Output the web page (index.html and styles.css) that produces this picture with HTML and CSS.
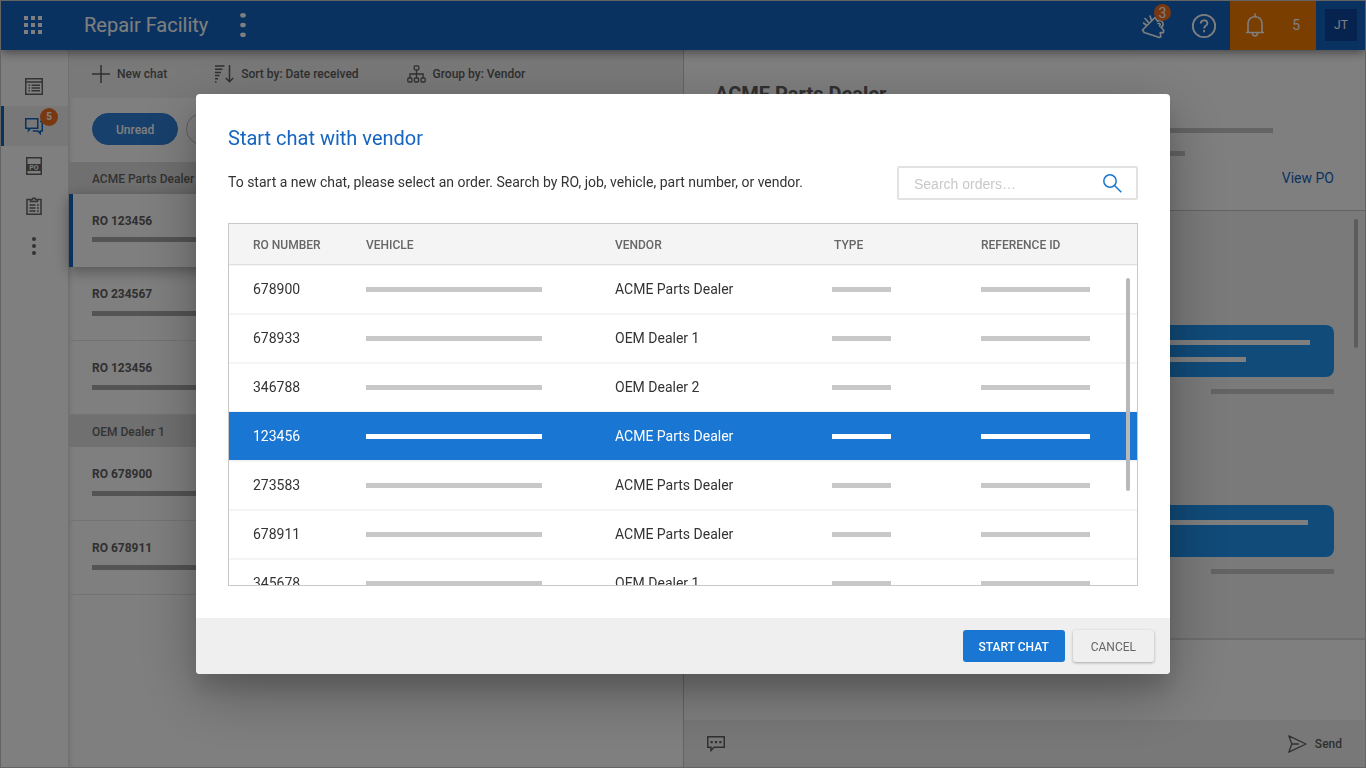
FILE: index.html
```html
<!DOCTYPE html>
<html lang="en">
<head>
<meta charset="utf-8">
<title>Repair Facility</title>
<meta name="viewport" content="width=device-width, initial-scale=1">
<link rel="stylesheet" href="styles.css">
</head>
<body>
<div class="app">
  <header class="topbar">
    <button class="icon-btn apps" aria-label="Apps">
      <svg width="18" height="18" viewBox="0 0 18 18" fill="currentColor"><path d="M0 0h4v4H0zM7 0h4v4H7zM14 0h4v4h-4zM0 7h4v4H0zM7 7h4v4H7zM14 7h4v4h-4zM0 14h4v4H0zM7 14h4v4H7zM14 14h4v4h-4z"/></svg>
    </button>
    <h1 class="brand">Repair Facility</h1>
    <button class="icon-btn more" aria-label="More">
      <svg width="6" height="24" viewBox="0 0 6 24" fill="currentColor"><ellipse cx="3" cy="2.300" rx="2.800" ry="2.300"/><ellipse cx="3" cy="12" rx="2.800" ry="2.300"/><ellipse cx="3" cy="21.700" rx="2.800" ry="2.300"/></svg>
    </button>
    <div class="topbar-actions">
      <button class="icon-btn tile" aria-label="Announcements, 3 new">
        <svg width="26" height="26" viewBox="0 0 26 26" fill="none" stroke="currentColor" stroke-width="1.600" stroke-linejoin="round" stroke-linecap="round"><path d="M15 4.500L2.500 17l1.700 2.500L19.500 24.500l1.300-1-.6-4 3 .3.600-2.300-2.600-3.200M15 4.500l2.500 3.500"/><path d="M17.500 8c4.500-2 7.700 3.500 3.700 6.300M18 10.500c2.200-.6 3 1.400 1.500 2.500M3.500 10l2.600 2M5 5.500l3.200 3.600M10 3l1.400 4"/></svg>
        <span class="badge badge-top">3</span>
      </button>
      <button class="icon-btn tile tile-help" aria-label="Help">
        <svg width="26" height="26" viewBox="0 0 26 26" fill="none" stroke="currentColor" stroke-width="1.800"><circle cx="13" cy="13" r="11.200"/><path d="M9.800 10.500c0-4.300 6.600-4.200 6.600-.3 0 2.600-3.300 2.600-3.300 5.200M13.100 17v2.200"/></svg>
      </button>
      <button class="alerts" aria-label="5 notifications">
        <svg width="20" height="24" viewBox="0 0 20 24" fill="none" stroke="currentColor" stroke-width="1.600"><path d="M1 19.500h18M3 19.500V10.500c0-9 14-9 14 0v9M10 3.500V.5"/><path d="M7.500 20c0 4 5 4 5 0"/></svg>
        <span>5</span>
      </button>
      <div class="account"><button class="avatar">JT</button></div>
    </div>
  </header>

  <div class="workspace">
    <nav class="rail" aria-label="Sections">
      <a href="#" class="rail-item" aria-label="Orders">
        <svg width="18" height="17" viewBox="0 0 18 17" fill="none" stroke="currentColor" stroke-width="1.500"><path d="M.75.75h16.500v15.500H.75zM.75 4h16.500M6.500 7.250H15M6.500 10H15M6.500 12.750H15M3.500 7.250H5M3.500 10H5M3.500 12.750H5"/></svg>
      </a>
      <a href="#" class="rail-item active" aria-label="Chats, 5 unread">
        <svg width="18" height="17" viewBox="0 0 18 17" fill="none" stroke="currentColor" stroke-width="1.500"><path d="M.75.75h12v9.500H5.500L3.500 12.500v-2.250H.75z"/><path d="M15 3.500h2.250v9.500h-2v2.500l-2.500-2.500h-5"/></svg>
        <span class="badge badge-rail">5</span>
      </a>
      <a href="#" class="rail-item" aria-label="Purchase orders">
        <svg width="16" height="18" viewBox="0 0 16 18"><path d="M.75.75h14.500v16.500H.75z" fill="none" stroke="currentColor" stroke-width="1.500"/><path d="M0 7h16v7H0z" fill="currentColor"/><text x="8" y="13" class="po-text">PO</text></svg>
      </a>
      <a href="#" class="rail-item" aria-label="Clipboard">
        <svg width="16" height="18" viewBox="0 0 16 18" fill="none" stroke="currentColor" stroke-width="1.500"><path d="M4 2.500H1v14.750h14V2.500h-3M4.500 4.500V2.500H6.500a1.500 1.500 0 0 1 3 0h2v2zM3.500 8h6M3.500 11h6M3.500 14h6M11 8h1.800M11 11h1.800M11 14h1.800"/></svg>
      </a>
      <a href="#" class="rail-item" aria-label="More">
        <svg width="4" height="18" viewBox="0 0 4 18" fill="currentColor"><circle cx="2" cy="2" r="2"/><circle cx="2" cy="9" r="2"/><circle cx="2" cy="16" r="2"/></svg>
      </a>
    </nav>

    <section class="chats">
      <div class="toolbar">
        <button class="tool tool-new">
          <svg width="18" height="18" viewBox="0 0 18 18" stroke="currentColor" stroke-width="1.500"><path d="M9 0v18M0 9h18"/></svg>
          New chat
        </button>
        <button class="tool tool-sort">
          <svg width="19" height="18" viewBox="0 0 19 18" fill="none" stroke="currentColor" stroke-width="1.500"><path d="M0 1h9.500M0 4.200h7.500M0 7.400h6M0 10.600h4.500M0 13.800h3M0 17h1.500M14.500 0v17M10.800 13l3.700 3.700 3.700-3.700"/></svg>
          Sort by: Date received
        </button>
        <button class="tool">
          <svg width="19" height="18" viewBox="0 0 19 18" fill="none" stroke="currentColor" stroke-width="1.300"><rect x="7.200" y=".8" width="4.600" height="4" rx="1"/><rect x=".8" y="13" width="4.200" height="4" rx="1"/><rect x="7.400" y="13" width="4.200" height="4" rx="1"/><rect x="14" y="13" width="4.200" height="4" rx="1"/><path d="M9.500 5v8M2.900 13V9h13.200v4"/></svg>
          Group by: Vendor
        </button>
      </div>
      <div class="filters">
        <button class="pill pill-on">Unread</button>
        <button class="pill">All</button>
      </div>
      <h2 class="group">ACME Parts Dealer</h2>
      <article class="chat selected"><h3>RO 123456</h3><div class="line"></div></article>
      <article class="chat"><h3>RO 234567</h3><div class="line"></div></article>
      <article class="chat"><h3>RO 123456</h3><div class="line"></div></article>
      <h2 class="group">OEM Dealer 1</h2>
      <article class="chat"><h3>RO 678900</h3><div class="line"></div></article>
      <article class="chat"><h3>RO 678911</h3><div class="line"></div></article>
    </section>

    <main class="detail">
      <div class="detail-head">
        <h2>ACME Parts Dealer</h2>
        <div class="line head-line"></div>
        <div class="line head-line-short"></div>
        <a href="#" class="view-po">View PO</a>
      </div>
      <div class="thread">
        <div class="bubble"><div class="line"></div><div class="line l-short"></div></div>
        <div class="line stamp"></div>
        <div class="bubble bubble-next"><div class="line"></div></div>
        <div class="line stamp"></div>
        <div class="scroll-thumb thread-thumb"></div>
      </div>
      <div class="compose"></div>
      <div class="compose-bar">
        <button class="tool" aria-label="Templates">
          <svg width="18" height="16" viewBox="0 0 18 16" fill="none" stroke="currentColor" stroke-width="1.500"><path d="M.75.75h16.500v10.500H7L4 14.500v-3.250H.75z"/><path d="M3.500 6.200h2.200M7.900 6.200h2.200M12.300 6.200h2.200" stroke-width="2.200"/></svg>
        </button>
        <button class="tool">
          <svg width="20" height="18" viewBox="0 0 20 18" fill="none" stroke="currentColor" stroke-width="1.300" stroke-linejoin="round"><path d="M.8.8L18 9 .8 17.200 3.800 9zM3.800 9H11"/></svg>
          Send
        </button>
      </div>
    </main>
  </div>
</div>

<div class="overlay">
  <div class="modal" role="dialog" aria-modal="true" aria-labelledby="dlg-title">
    <div class="modal-body">
      <h2 class="modal-title" id="dlg-title">Start chat with vendor</h2>
      <div class="intro">
        <label for="order-search">To start a new chat, please select an order. Search by RO, job, vehicle, part number, or vendor.</label>
        <div class="search">
          <input id="order-search" type="text" placeholder="Search orders…">
          <svg width="19" height="19" viewBox="0 0 19 19" fill="none" stroke="currentColor" stroke-width="1.500"><circle cx="7" cy="7" r="6.200"/><path d="M11.500 11.500l6.800 6.800"/></svg>
        </div>
      </div>
      <div class="orders">
        <div class="orders-scroll">
          <table>
            <colgroup><col class="c-ro"><col class="c-vehicle"><col class="c-vendor"><col class="c-type"><col></colgroup>
            <thead><tr><th>RO NUMBER</th><th>VEHICLE</th><th>VENDOR</th><th class="inset">TYPE</th><th>REFERENCE ID</th></tr></thead>
            <tbody>
              <tr><td>678900</td><td><div class="ph ph-vehicle"></div></td><td>ACME Parts Dealer</td><td><div class="ph ph-type"></div></td><td><div class="ph ph-ref"></div></td></tr>
              <tr><td>678933</td><td><div class="ph ph-vehicle"></div></td><td>OEM Dealer 1</td><td><div class="ph ph-type"></div></td><td><div class="ph ph-ref"></div></td></tr>
              <tr><td>346788</td><td><div class="ph ph-vehicle"></div></td><td>OEM Dealer 2</td><td><div class="ph ph-type"></div></td><td><div class="ph ph-ref"></div></td></tr>
              <tr class="picked" aria-selected="true"><td>123456</td><td><div class="ph ph-vehicle"></div></td><td>ACME Parts Dealer</td><td><div class="ph ph-type"></div></td><td><div class="ph ph-ref"></div></td></tr>
              <tr><td>273583</td><td><div class="ph ph-vehicle"></div></td><td>ACME Parts Dealer</td><td><div class="ph ph-type"></div></td><td><div class="ph ph-ref"></div></td></tr>
              <tr><td>678911</td><td><div class="ph ph-vehicle"></div></td><td>ACME Parts Dealer</td><td><div class="ph ph-type"></div></td><td><div class="ph ph-ref"></div></td></tr>
              <tr><td>345678</td><td><div class="ph ph-vehicle"></div></td><td>OEM Dealer 1</td><td><div class="ph ph-type"></div></td><td><div class="ph ph-ref"></div></td></tr>
            </tbody>
          </table>
        </div>
        <div class="scroll-thumb orders-thumb"></div>
      </div>
    </div>
    <footer class="modal-foot">
      <button class="btn btn-primary">START CHAT</button>
      <button class="btn btn-plain">CANCEL</button>
    </footer>
  </div>
</div>
</body>
</html>
```
FILE: styles.css
```css
* { box-sizing: border-box; }
body {
  margin: 0;
  font: 14px/16px Roboto, "Liberation Sans", sans-serif;
  color: #333;
  background: #fff;
}
h1, h2, h3 { margin: 0; }
button {
  font: inherit;
  color: inherit;
  background: none;
  border: 0;
  padding: 0;
  cursor: pointer;
}
a { text-decoration: none; }
svg { display: block; flex: none; }

.app {
  height: 100vh;
  display: flex;
  flex-direction: column;
  border: 1px solid #c8c8c8;
  overflow: hidden;
}

/* Top bar */
.topbar {
  flex: none;
  position: relative;
  z-index: 3;
  height: 49px;
  display: flex;
  align-items: center;
  background: #1565c0;
  color: #fff;
  box-shadow: 0 2px 10px rgba(0, 0, 0, .5);
}
.icon-btn {
  display: flex;
  align-items: center;
  justify-content: center;
}
.apps { margin-left: 23px; padding-bottom: 1px; }
.brand {
  margin-left: 42px;
  padding-bottom: 2px;
  font-size: 20px;
  line-height: 24px;
  font-weight: 400;
}
.more { margin-left: 32px; padding-bottom: 1px; }
.topbar-actions {
  margin-left: auto;
  align-self: stretch;
  display: flex;
}
.tile {
  position: relative;
  width: 51px;
  padding-right: 2px;
  border-left: 1px solid #1769b8;
}
.tile-help { padding-top: 1px; }
.badge {
  position: absolute;
  display: flex;
  align-items: center;
  justify-content: center;
  border-radius: 50%;
  background: #f37021;
  color: #fff;
}
.badge-top { width: 17px; height: 17px; left: 25px; top: 3px; }
.badge-rail {
  width: 18px;
  height: 18px;
  left: 39px;
  top: 2px;
  font-size: 10px;
  font-weight: 700;
}
.alerts {
  width: 86px;
  padding: 0 16px 2px 15px;
  display: flex;
  align-items: center;
  justify-content: space-between;
  background: #f57c00;
}
.account {
  display: flex;
  align-items: center;
  padding: 0 8px 1px 9px;
}
.avatar {
  width: 32px;
  height: 32px;
  background: #0d47a1;
  font-size: 12px;
}

.workspace { flex: 1; display: flex; min-height: 0; }

/* Icon rail */
.rail {
  flex: none;
  width: 67px;
  padding-top: 16px;
  color: #666;
  background: #fff;
}
.rail-item {
  position: relative;
  height: 40px;
  display: flex;
  align-items: center;
  justify-content: center;
  padding-right: 1px;
  color: inherit;
}
.rail-item.active {
  color: #1565c0;
  background: #f0f0f0;
  box-shadow: inset 3px 0 #1565c0;
}
.po-text {
  font: 700 7px Roboto, sans-serif;
  fill: #fff;
  text-anchor: middle;
}

/* Conversation list */
.chats {
  flex: none;
  width: 615px;
  padding-left: 1px;
  box-shadow: inset 4px 0 4px -2px rgba(0, 0, 0, .15);
}
.toolbar {
  height: 48px;
  padding-left: 23px;
  display: flex;
  align-items: center;
  background: #f2f2f2;
}
.tool {
  display: flex;
  align-items: center;
  gap: 7px;
  color: #606060;
  font-size: 12px;
  font-weight: 500;
}
.tool-new { margin-right: 48px; }
.tool-sort { margin-right: 48px; }
.filters { display: flex; gap: 8px; padding: 15px 23px 17px; }
.pill {
  height: 32px;
  padding: 0 23px;
  border: 1px solid #bbb;
  border-radius: 16px;
  font-size: 12px;
  line-height: 32px;
  font-weight: 500;
}
.pill-on { border-color: #2f80d8; background: #2f80d8; color: #fff; }
.group {
  height: 32px;
  padding: 0 23px;
  background: #e0e0e0;
  color: #666;
  font-size: 12px;
  line-height: 34px;
  font-weight: 500;
}
.chat {
  height: 74px;
  padding: 19px 23px 0;
  border-bottom: 1px solid #e6e6e6;
}
.chat h3 {
  margin-bottom: 9px;
  color: #606060;
  font-size: 12px;
  line-height: 16px;
  font-weight: 700;
}
.chat.selected {
  height: 73px;
  border-bottom: 0;
  box-shadow: inset 4px 0 #1565c0, 0 4px 14px rgba(0, 0, 0, .35);
}
.selected h3 { margin-bottom: 8px; }
.line { height: 5px; background: #c8c8c8; }
.chat .line { background: #a8a8a8; }

/* Conversation detail */
.detail {
  flex: 1;
  min-width: 0;
  display: flex;
  flex-direction: column;
  border-left: 1px solid #c8c8c8;
}
.detail-head {
  height: 161px;
  padding: 32px 31px 0;
  display: flex;
  flex-direction: column;
  border-bottom: 1px solid #c8c8c8;
}
.detail-head h2 { color: #606060; font-size: 20px; line-height: 24px; font-weight: 700; }
.head-line { margin: 22px 61px 0 0; }
.head-line-short { margin: 18px 149px 0 0; }
.view-po {
  margin-top: 14px;
  align-self: flex-end;
  color: #1565c0;
}
.thread {
  position: relative;
  flex: 1;
  padding: 114px 31px 0;
  background: #f5f5f5;
}
.bubble {
  height: 52px;
  margin-left: 160px;
  padding: 15px 24px 0;
  border-radius: 8px;
  background: #2196f3;
}
.bubble-next { margin-top: 111px; padding-right: 26px; }
.bubble .line { background: #fff; }
.bubble .l-short { margin: 12px 64px 0 0; }
.stamp { width: 123px; margin: 12px 0 0 auto; }
.scroll-thumb { position: absolute; border-radius: 2px; background: #b8b8b8; }
.thread-thumb { width: 4px; height: 129px; right: 7px; top: 8px; }
.compose { height: 82px; border-top: 2px solid #dcdcdc; }
.compose-bar {
  height: 47px;
  padding: 0 23px;
  display: flex;
  align-items: center;
  justify-content: space-between;
  background: #f0f0f0;
}

/* Dialog */
.overlay {
  position: fixed;
  inset: 0;
  z-index: 10;
  display: flex;
  align-items: center;
  justify-content: center;
  padding: 16px;
  background: rgba(0, 0, 0, .5);
}
.modal {
  width: 100%;
  max-width: 974px;
  border-radius: 4px;
  overflow: hidden;
  background: #fff;
  box-shadow: 0 19px 60px rgba(0, 0, 0, .3), 0 15px 20px rgba(0, 0, 0, .1);
}
.modal-body { padding: 32px; }
.modal-title {
  color: #1565c0;
  font-size: 20px;
  line-height: 24px;
  font-weight: 400;
}
.intro {
  margin: 16px 0 23px;
  display: flex;
  align-items: center;
  justify-content: space-between;
  gap: 24px;
}
.intro label { padding-bottom: 2px; }
.search {
  width: 241px;
  height: 34px;
  padding: 0 14px 0 15px;
  display: flex;
  align-items: center;
  border: 2px solid #e2e2e2;
  border-radius: 2px;
  color: #1976d2;
}
.search input {
  flex: 1;
  min-width: 0;
  padding: 1px 0 0;
  border: 0;
  outline: 0;
  background: none;
  color: #333;
  font: 14px/16px "Liberation Sans", Arial, sans-serif;
}
.search input::placeholder { color: #c8c8c8; }
.orders { position: relative; border: 1px solid #c8c8c8; }
.orders-scroll {
  height: 361px;
  overflow: auto;
  scrollbar-width: none;
}
table { width: 100%; table-layout: fixed; border-collapse: separate; border-spacing: 0; }
.c-ro { width: 137px; }
.c-vehicle { width: 249px; }
.c-vendor { width: 217px; }
.c-type { width: 149px; }
th, td { padding: 0; text-align: left; }
th:first-child, td:first-child { padding-left: 24px; }
th {
  height: 41px;
  padding-top: 2px;
  border-bottom: 1px solid #e0e0e0;
  background: #f4f4f4;
  color: #666;
  font-size: 12px;
  font-weight: 500;
}
th.inset { padding-left: 2px; }
td {
  height: 49px;
  padding-bottom: 1px;
  border-top: 1px solid #f5f5f5;
  border-bottom: 1px solid #f3f3f3;
}
.picked td { border-top-color: #1976d2; background: #1976d2; color: #fff; }
.ph { height: 5px; background: #c8c8c8; }
.picked .ph { background: #fff; }
.ph-vehicle { width: 176px; }
.ph-type { width: 59px; }
.ph-ref { width: 109px; }
.orders-thumb { width: 4px; height: 213px; right: 7px; top: 54px; }
.modal-foot {
  padding: 12px 16px;
  display: flex;
  justify-content: flex-end;
  gap: 8px;
  background: #efefef;
}
.btn {
  height: 32px;
  padding: 1px 16px 0;
  border-radius: 3px;
  font-size: 12px;
  font-weight: 500;
}
.btn-primary { background: #1976d2; color: #fff; }
.btn-plain {
  padding: 1px 18px 0;
  color: #666;
  font-weight: 400;
  box-shadow: 0 1px 3px rgba(0, 0, 0, .3);
}
```
